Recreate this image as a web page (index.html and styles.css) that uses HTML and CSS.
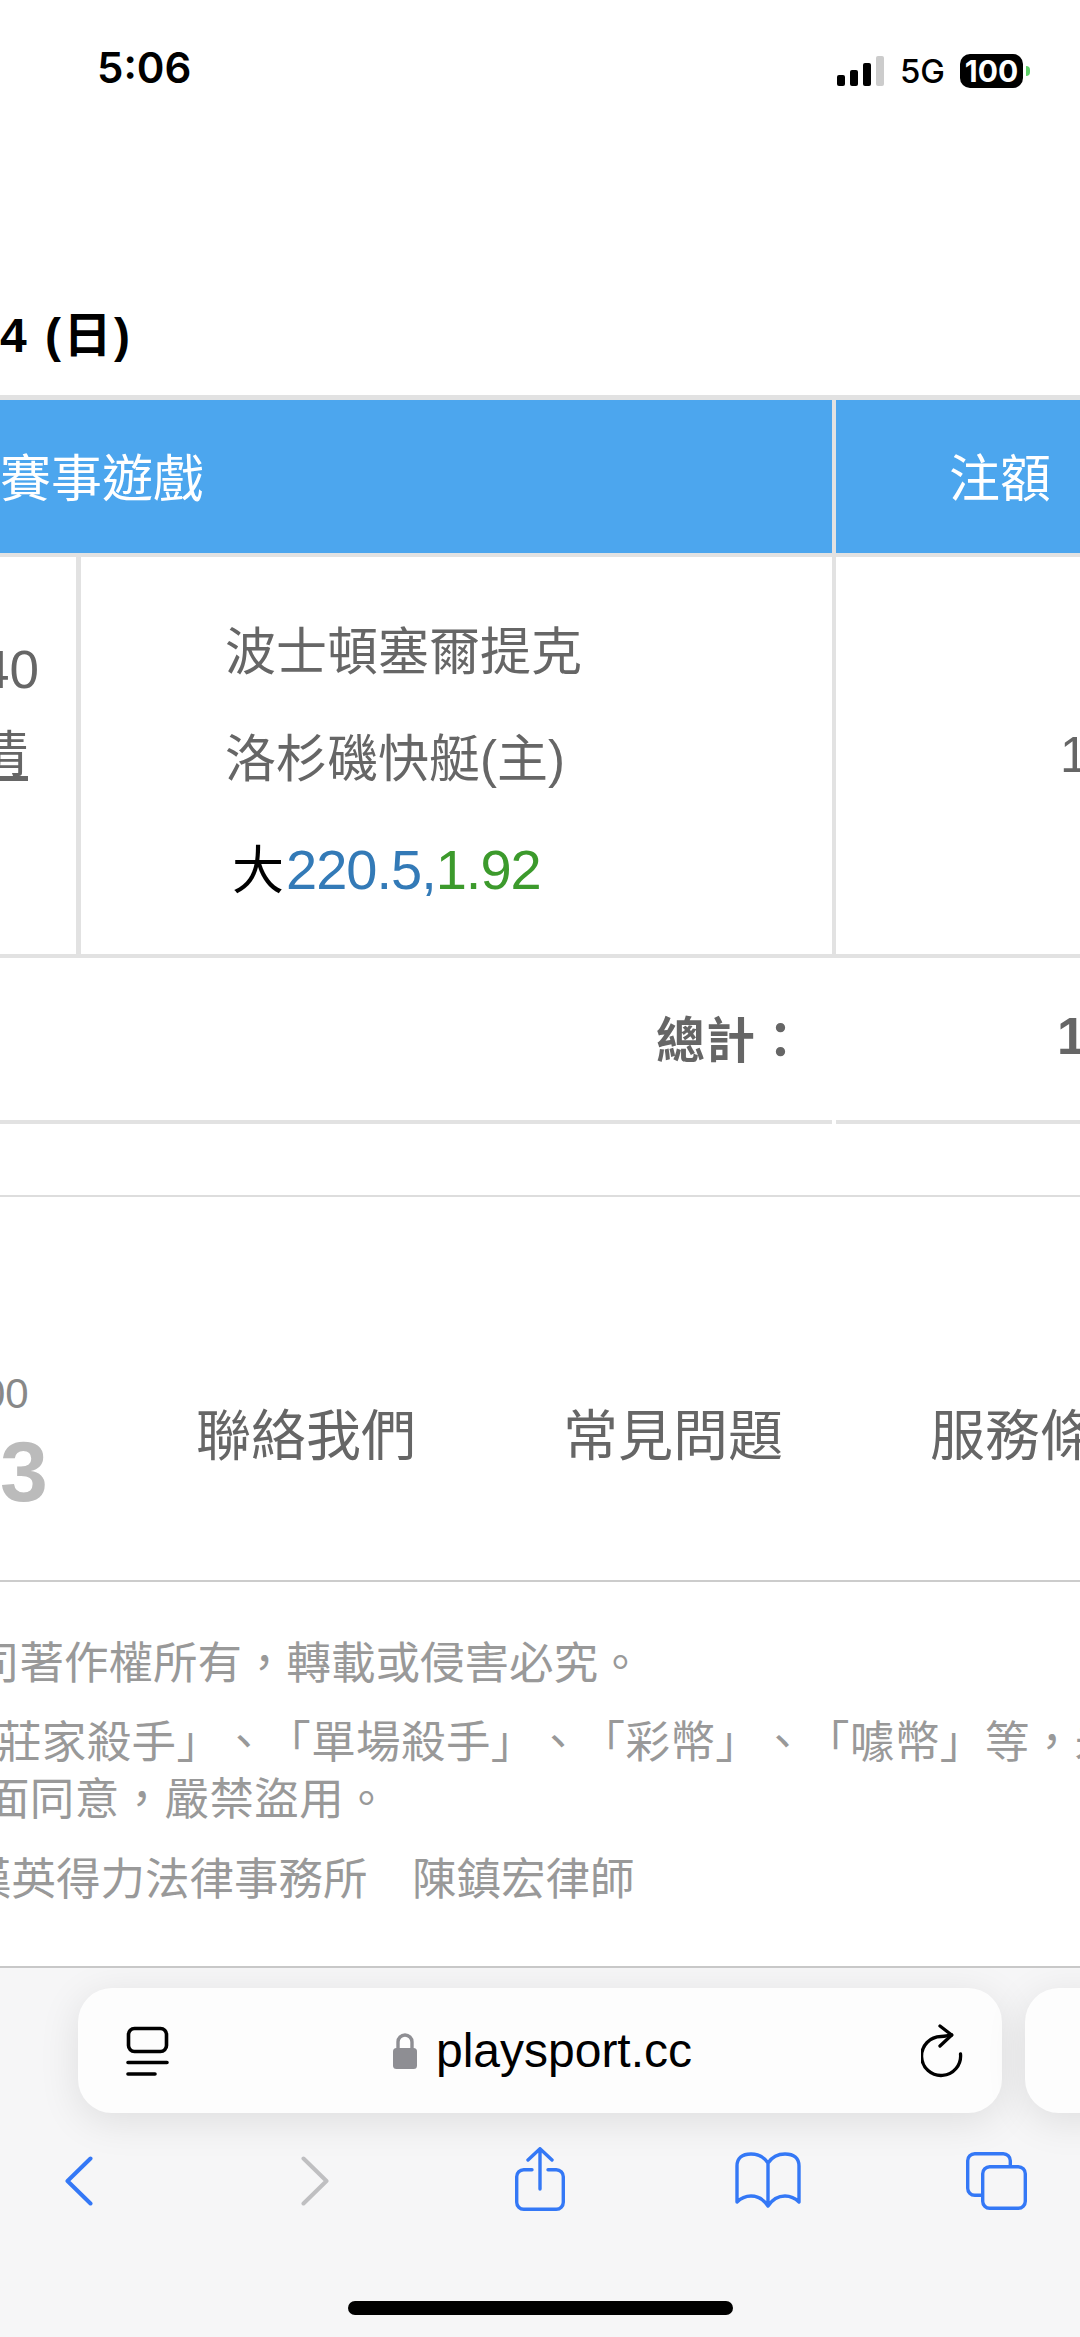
FILE: index.html
```html
<!DOCTYPE html>
<html lang="zh-Hant">
<head>
    <meta charset="UTF-8" />
    <meta name="viewport" content="width=device-width, initial-scale=1.0" />
    <title>playsport.cc</title>
    <link rel="stylesheet" href="styles.css">
</head>
<body>
    <div class="status-bar">
        <span class="clock">5:06</span>
        <div class="status-icons">
            <div class="signal">
                <span class="bar bar-1"></span>
                <span class="bar bar-2"></span>
                <span class="bar bar-3"></span>
                <span class="bar bar-4"></span>
            </div>
            <span class="network">5G</span>
            <span class="battery">100</span>
            <span class="battery-nub"></span>
        </div>
    </div>

    <div class="page">
        <h2 class="date">4 (日)</h2>

        <div class="table">
            <div class="row head-row">
                <div class="cell cell-game">賽事遊戲</div>
                <div class="cell cell-amount">注額</div>
            </div>
            <div class="row body-row">
                <div class="cell cell-time">
                    <span class="time-text">40</span>
                    <span class="detail-link">清</span>
                </div>
                <div class="cell cell-match">
                    <p class="team">波士頓塞爾提克</p>
                    <p class="team">洛杉磯快艇(主)</p>
                    <p class="bet">大<span class="bet-line">220.5,</span><span class="bet-odds">1.92</span></p>
                </div>
                <div class="cell cell-stake">1</div>
            </div>
            <div class="row total-row">
                <div class="cell total-label">總計：</div>
                <div class="cell total-value">1</div>
            </div>
            <div class="row foot-row">
                <div class="foot-left"></div>
                <div class="foot-right"></div>
            </div>
        </div>

        <div class="footer-nav">
            <div class="phone">
                <span class="phone-small">00</span>
                <span class="phone-big">3</span>
            </div>
            <a class="nav-link">聯絡我們</a>
            <a class="nav-link">常見問題</a>
            <a class="nav-link">服務條款</a>
        </div>

        <div class="legal">
            <p class="legal-one">本公司著作權所有，轉載或侵害必究。</p>
            <p class="legal-two">「莊家殺手」、「單場殺手」、「彩幣」、「噱幣」等，未經<br>書面同意，嚴禁盜用。</p>
            <p class="legal-three">漢英得力法律事務所　陳鎮宏律師</p>
        </div>
    </div>

    <div class="toolbar">
        <div class="tab-row">
            <div class="url-bar">
                <svg width="44" height="52" viewBox="0 0 44 52">
                    <rect x="3.500" y="3.500" width="38" height="23" rx="6" fill="none" stroke="#000" stroke-width="3.600" />
                    <path d="M3 37.500H42M3 49H30" fill="none" stroke="#000" stroke-width="3.600" stroke-linecap="round" />
                </svg>
                <div class="url">
                    <svg width="26" height="38" viewBox="0 0 26 38">
                        <path d="M6 17V10a7 7 0 0 1 14 0v7" fill="none" stroke="#8e8e93" stroke-width="3.400" />
                        <rect x="1" y="16" width="24" height="21" rx="3.500" fill="#8e8e93" />
                    </svg>
                    <span class="url-text">playsport.cc</span>
                </div>
                <svg width="44" height="54" viewBox="0 0 44 54">
                    <path d="M39.500 30A19.500 19.500 0 1 1 20 12.500C24 12.500 27 11.500 30.700 11" fill="none" stroke="#000" stroke-width="3.300" stroke-linecap="round" />
                    <path d="M19 2L30.700 11L19 22" fill="none" stroke="#000" stroke-width="3.300" stroke-linecap="round" stroke-linejoin="round" />
                </svg>
            </div>
            <div class="next-tab"></div>
        </div>
        <div class="nav-icons">
            <svg class="nav-back" width="28" height="50" viewBox="0 0 28 50">
                <path d="M25.500 2.500L2.500 25L25.500 47.500" fill="none" stroke="#3478f6" stroke-width="4" stroke-linecap="round" stroke-linejoin="round" />
            </svg>
            <svg class="nav-forward" width="28" height="50" viewBox="0 0 28 50">
                <path d="M2.500 2.500L25.500 25L2.500 47.500" fill="none" stroke="#bfbfc1" stroke-width="4" stroke-linecap="round" stroke-linejoin="round" />
            </svg>
            <svg class="nav-share" width="54" height="68" viewBox="0 0 54 68">
                <path d="M19 22.700H10.700a7 7 0 0 0-7 7V55.300a7 7 0 0 0 7 7H43.300a7 7 0 0 0 7-7V29.700a7 7 0 0 0-7-7H35" fill="none" stroke="#3478f6" stroke-width="3.400" stroke-linecap="round" />
                <path d="M27 42V2M15 13L27 1.700L39 13" fill="none" stroke="#3478f6" stroke-width="3.400" stroke-linecap="round" stroke-linejoin="round" />
            </svg>
            <svg class="nav-book" width="70" height="60" viewBox="0 0 70 60">
                <path d="M35 12C31 6 26 3 18 3C9 3 4 7 4 15V51C8 47 13 45 18 45C25 45 31 49 35 55C39 49 45 45 52 45C57 45 62 47 66 51V15C66 7 61 3 52 3C44 3 39 6 35 12ZM35 12V55" fill="none" stroke="#3478f6" stroke-width="3.400" stroke-linejoin="round" />
            </svg>
            <svg class="nav-tabs" width="66" height="62" viewBox="0 0 66 62">
                <path d="M47.300 16.700V10.700a7 7 0 0 0-7-7H11.700a7 7 0 0 0-7 7V38.300a7 7 0 0 0 7 7h8" fill="none" stroke="#3478f6" stroke-width="3.400" />
                <rect x="19.700" y="16.700" width="42.600" height="41.600" rx="7" fill="none" stroke="#3478f6" stroke-width="3.400" />
            </svg>
        </div>
        <div class="home-bar"></div>
    </div>
</body>
</html>
```

FILE: styles.css
```css
* {
    margin: 0;
    padding: 0;
    box-sizing: border-box;
}

body {
    width: 1080px;
    height: 2337px;
    overflow: hidden;
    display: flex;
    flex-direction: column;
    background-color: #fff;
    font-family: "Liberation Sans", "Noto Sans CJK TC", sans-serif;
    color: #666;
    text-spacing-trim: space-all;
}

/* status bar */
.status-bar {
    height: 150px;
    flex-shrink: 0;
    display: flex;
    justify-content: space-between;
    align-items: flex-start;
    padding: 44px 50px 0 97px;
}

.clock {
    font-family: Inter, sans-serif;
    font-size: 42px;
    line-height: 48px;
    font-weight: 600;
    color: #000;
}

.status-icons {
    display: flex;
    align-items: center;
    margin-top: 7px;
}

.signal {
    display: flex;
    align-items: flex-end;
    gap: 5px;
    height: 30px;
}

.bar {
    width: 8px;
    border-radius: 2px;
    background-color: #000;
}

.bar-1 { height: 11px; }
.bar-2 { height: 16px; }
.bar-3 { height: 23px; }
.bar-4 { height: 30px; background-color: #ccc; }

.network {
    margin-left: 16px;
    font-family: Inter, sans-serif;
    font-size: 33px;
    font-weight: 500;
    color: #000;
}

.battery {
    margin-left: 15px;
    width: 63px;
    height: 34px;
    border-radius: 10px;
    background-color: #000;
    color: #fff;
    font-family: Inter, sans-serif;
    font-size: 30px;
    font-weight: 700;
    line-height: 34px;
    text-align: center;
}

.battery-nub {
    margin-left: 3px;
    width: 4px;
    height: 10px;
    border-radius: 0 5px 5px 0;
    background-color: #5fd068;
}

/* scrolled page content */
.page {
    flex: 1;
    overflow: hidden;
    min-height: 0;
}

.date {
    height: 62px;
    margin-top: 155px;
    margin-bottom: 28px;
    font-size: 48px;
    line-height: 62px;
    font-weight: 700;
    letter-spacing: 2.500px;
    color: #000;
    white-space: nowrap;
}

.table {
    width: 1080px;
    border-top: 5px solid #e2e2e2;
}

.row {
    display: flex;
}

.cell {
    flex-shrink: 0;
    white-space: nowrap;
}

.head-row {
    height: 157px;
    background-color: #4ca6ee;
    border-bottom: 4px solid #e2e2e2;
    color: #fff;
    font-size: 51px;
    align-items: center;
}

.head-row .cell-game {
    width: 836px;
    height: 100%;
    display: flex;
    align-items: center;
    border-right: 4px solid #e2e2e2;
    padding-bottom: 4px;
}

.head-row .cell-amount {
    padding-left: 113px;
    padding-bottom: 4px;
}

.body-row {
    height: 401px;
    border-bottom: 4px solid #e2e2e2;
}

.cell-time {
    width: 81px;
    border-right: 5px solid #e2e2e2;
    padding-top: 87px;
    padding-right: 40px;
    font-size: 53px;
    line-height: 52px;
    display: flex;
    flex-direction: column;
    align-items: flex-end;
}

.time-text {
    margin-right: -3px;
}

.detail-link {
    margin-top: 34px;
    font-size: 50px;
    line-height: 50px;
    text-decoration: underline;
    text-underline-offset: 4px;
    margin-right: 8px;
}

.cell-match {
    width: 755px;
    border-right: 4px solid #e2e2e2;
    padding: 71px 0 0 144px;
    font-size: 51px;
}

.team {
    height: 107px;
    line-height: 50px;
}

.bet {
    margin-top: -2px;
    padding-left: 7px;
    font-size: 52px;
    line-height: 60px;
    color: #000;
}

.bet-line,
.bet-odds {
    font-size: 56px;
    letter-spacing: -1px;
}

.bet-line {
    color: #337ab7;
    margin-left: 2px;
}

.bet-odds {
    color: #3c9a2c;
}

.cell-stake {
    padding: 173px 0 0 224px;
    font-size: 50px;
    line-height: 50px;
}

.total-row {
    height: 162px;
    align-items: center;
    font-weight: 700;
    font-size: 49px;
    padding-bottom: 6px;
}

.total-label {
    width: 836px;
    padding-right: 30px;
    text-align: right;
    letter-spacing: 1px;
}

.total-value {
    padding-left: 221px;
    font-size: 52px;
}

.foot-row {
    height: 77px;
    gap: 4px;
    border-bottom: 2px solid #ddd;
}

.foot-left,
.foot-right {
    height: 4px;
    background-color: #e2e2e2;
}

.foot-left {
    width: 832px;
}

.foot-right {
    flex: 1;
}

/* footer */
.footer-nav {
    height: 385px;
    display: flex;
    align-items: flex-start;
    border-bottom: 2px solid #ccc;
    white-space: nowrap;
}

.phone {
    width: 196px;
    flex-shrink: 0;
    padding-top: 173px;
    display: flex;
    flex-direction: column;
}

.phone-small {
    font-size: 42px;
    line-height: 48px;
    color: #888;
    margin-left: -18px;
}

.phone-big {
    font-size: 86px;
    line-height: 80px;
    margin-top: 13px;
    font-weight: 700;
    color: #bbb;
}

.nav-link {
    font-size: 55px;
    line-height: 60px;
    margin: 209px 147px 0 0;
    color: #666;
}

.legal {
    color: #999;
    font-size: 44.500px;
    white-space: nowrap;
}

.legal-one,
.legal-three {
    line-height: 58px;
}

.legal-one {
    margin: 53px 0 0 -114px;
}

.legal-two {
    margin: 21px 0 0 -60px;
    line-height: 57px;
    letter-spacing: 0.400px;
    text-indent: 12px;
}

.legal-three {
    margin: 23px 0 0 -33px;
}

/* safari toolbar */
.toolbar {
    height: 371px;
    flex-shrink: 0;
    background-color: #f6f6f7;
    border-top: 2px solid #c8c8c8;
    overflow: hidden;
}

.tab-row {
    display: flex;
    gap: 23px;
    margin: 20px 0 0 78px;
}

.url-bar {
    flex-shrink: 0;
    width: 924px;
    height: 125px;
    border-radius: 34px;
    background-color: #fdfdfd;
    box-shadow: 0 8px 40px rgba(0, 0, 0, 0.1);
    display: flex;
    align-items: center;
    justify-content: space-between;
    padding: 0 37px 0 47px;
}

.url {
    display: flex;
    align-items: center;
    gap: 18px;
    margin-right: 6px;
}

.url-text {
    font-size: 48px;
    color: #000;
}

.next-tab {
    flex-shrink: 0;
    width: 100px;
    height: 125px;
    border-radius: 34px;
    background-color: #fdfdfd;
    box-shadow: 0 8px 40px rgba(0, 0, 0, 0.1);
}

.nav-icons {
    display: flex;
    align-items: center;
    height: 68px;
    margin: 34px 0 0 65px;
}

.nav-icons svg {
    flex-shrink: 0;
}

.nav-forward { margin-left: 208px; }
.nav-share { margin-left: 184px; }
.nav-book { margin-left: 166px; }
.nav-tabs { margin-left: 160px; }

.home-bar {
    width: 385px;
    height: 14px;
    border-radius: 7px;
    background-color: #000;
    margin: 86px 0 0 348px;
}
```
